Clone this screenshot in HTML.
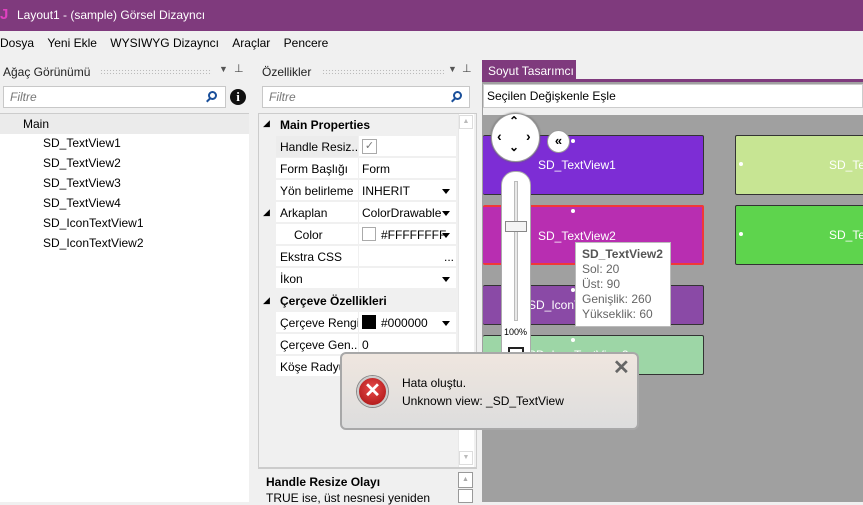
<!DOCTYPE html>
<html><head><meta charset="utf-8"><style>
*{box-sizing:border-box;margin:0;padding:0}
body{width:863px;height:502px;overflow:hidden;background:#f0f0f0;font-family:"Liberation Sans",sans-serif;font-size:12px;color:#000;position:relative}
.a{position:absolute}
.t{white-space:nowrap}
.hdr{color:#222;font-size:12px}
.dots{height:6px;background-image:radial-gradient(#bbb 0.6px,transparent 0.8px);background-size:3px 3px}
.filter{background:#fff;border:1px solid #c8c8c8;height:22px;font-style:italic;color:#777;padding:3px 6px}
.row{position:absolute;left:276px;width:180px;height:21px;border-bottom:1px solid #f0f0f0;background:#fff}
.row .n{position:absolute;left:4px;top:4px;width:78px;overflow:hidden;white-space:nowrap}
.row .v{position:absolute;left:86px;top:4px;white-space:nowrap}
.row .s{position:absolute;left:82px;top:0;width:1px;height:21px;background:#f0f0f0}
.dd{position:absolute;right:6px;top:9px;border-left:4px solid transparent;border-right:4px solid transparent;border-top:5px solid #000}
.box{position:absolute;border:1px solid #333;border-radius:2px;color:#fff;font-size:12px}
.dot{position:absolute;width:4px;height:4px;border-radius:2px;background:#fff}
</style></head><body>
<div class="a" style="left:0;top:0;width:863px;height:31px;background:#7f3a7d"></div>
<div class="a t" style="left:0;top:6px;color:#e040c0;font-weight:bold;font-size:15px">J</div>
<div class="a t" style="left:17px;top:8px;color:#fff;font-size:12px">Layout1 - (sample) Görsel Dizayncı</div>
<div class="a t" style="left:0;top:36px">Dosya&nbsp;&nbsp;&nbsp;&nbsp;Yeni Ekle&nbsp;&nbsp;&nbsp;&nbsp;WYSIWYG Dizayncı&nbsp;&nbsp;&nbsp;&nbsp;Araçlar&nbsp;&nbsp;&nbsp;&nbsp;Pencere</div>
<div class="a t hdr" style="left:3px;top:65px">Ağaç Görünümü</div>
<div class="a dots" style="left:100px;top:69px;width:112px"></div>
<div class="a t" style="left:219px;top:64px;font-size:9px;color:#555">▼</div>
<div class="a t" style="left:234px;top:62px;font-size:11px;color:#444">⊥</div>
<div class="a filter" style="left:3px;top:86px;width:223px">Filtre</div>
<div class="a" style="left:208px;top:91px;width:9px;height:9px;border:2px solid #1a4f9a;border-radius:50%"></div>
<div class="a" style="left:206px;top:99px;width:5px;height:2px;background:#1a4f9a;transform:rotate(-45deg)"></div>
<div class="a" style="left:230px;top:89px;width:16px;height:16px;border-radius:50%;background:#111;color:#fff;font-weight:bold;font-family:'Liberation Serif',serif;font-size:13px;text-align:center;line-height:16px">i</div>
<div class="a" style="left:0;top:113px;width:249px;height:389px;background:#fff;border-top:1px solid #ccc"></div>
<div class="a" style="left:0;top:114px;width:249px;height:20px;background:#ebebeb"></div>
<div class="a t" style="left:23px;top:117px">Main</div>
<div class="a t" style="left:43px;top:133px;line-height:20px">SD_TextView1<br>SD_TextView2<br>SD_TextView3<br>SD_TextView4<br>SD_IconTextView1<br>SD_IconTextView2</div>
<div class="a t hdr" style="left:262px;top:65px">Özellikler</div>
<div class="a dots" style="left:322px;top:69px;width:122px"></div>
<div class="a t" style="left:448px;top:64px;font-size:9px;color:#555">▼</div>
<div class="a t" style="left:462px;top:62px;font-size:11px;color:#444">⊥</div>
<div class="a filter" style="left:262px;top:86px;width:208px">Filtre</div>
<div class="a" style="left:453px;top:91px;width:9px;height:9px;border:2px solid #1a4f9a;border-radius:50%"></div>
<div class="a" style="left:451px;top:99px;width:5px;height:2px;background:#1a4f9a;transform:rotate(-45deg)"></div>
<div class="a" style="left:258px;top:113px;width:219px;height:355px;background:#f0f0f0;border:1px solid #ccc"></div>
<div class="a" style="left:458px;top:114px;width:16px;height:353px;background:#fff;border-left:1px solid #e8e8e8"></div>
<div class="a" style="left:459px;top:115px;width:14px;height:14px;border:1px solid #ddd;color:#bbb;font-size:7px;text-align:center;line-height:12px">▲</div>
<div class="a" style="left:459px;top:451px;width:14px;height:14px;border:1px solid #ddd;color:#bbb;font-size:7px;text-align:center;line-height:12px">▼</div>
<div class="a t" style="left:263px;top:118px;font-size:9px">◢</div>
<div class="a t" style="left:280px;top:118px;font-weight:bold">Main Properties</div>
<div class="row" style="top:136px"><div style="position:absolute;left:0;top:0;width:82px;height:21px;background:#ececec"></div><span class="n">Handle Resiz...</span><div class="s"></div><div style="position:absolute;left:86px;top:3px;width:15px;height:15px;border:1px solid #aaa;color:#777;font-size:11px;text-align:center;line-height:13px">✓</div></div>
<div class="row" style="top:158px"><span class="n">Form Başlığı</span><div class="s"></div><span class="v">Form</span></div>
<div class="row" style="top:180px"><span class="n">Yön belirleme</span><div class="s"></div><span class="v">INHERIT</span><div class="dd"></div></div>
<div class="a t" style="left:263px;top:207px;font-size:9px">◢</div>
<div class="row" style="top:202px"><span class="n">Arkaplan</span><div class="s"></div><span class="v" style="width:80px;overflow:hidden">ColorDrawable</span><div class="dd"></div></div>
<div class="row" style="top:224px"><span class="n" style="left:18px">Color</span><div class="s"></div><div style="position:absolute;left:86px;top:3px;width:14px;height:14px;border:1px solid #aaa;background:#fff"></div><span class="v" style="left:105px">#FFFFFFFF</span><div class="dd"></div></div>
<div class="row" style="top:246px"><span class="n">Ekstra CSS</span><div class="s"></div><span class="v" style="left:168px">...</span></div>
<div class="row" style="top:268px"><span class="n">İkon</span><div class="s"></div><div class="dd"></div></div>
<div class="a t" style="left:263px;top:295px;font-size:9px">◢</div>
<div class="a t" style="left:280px;top:294px;font-weight:bold">Çerçeve Özellikleri</div>
<div class="row" style="top:312px"><span class="n">Çerçeve Rengi</span><div class="s"></div><div style="position:absolute;left:86px;top:3px;width:14px;height:14px;background:#000"></div><span class="v" style="left:105px">#000000</span><div class="dd"></div></div>
<div class="row" style="top:334px"><span class="n">Çerçeve Gen...</span><div class="s"></div><span class="v">0</span></div>
<div class="row" style="top:356px"><span class="n">Köşe Radyus</span><div class="s"></div></div>
<div class="a" style="left:258px;top:468px;width:219px;height:34px;background:#f0f0f0;border-top:1px solid #ccc"></div>
<div class="a t" style="left:266px;top:475px;font-weight:bold">Handle Resize Olayı</div>
<div class="a t" style="left:266px;top:491px">TRUE ise, üst nesnesi yeniden</div>
<div class="a" style="left:458px;top:472px;width:15px;height:16px;background:#fff;border:1px solid #999;font-size:7px;color:#aaa;text-align:center;line-height:14px">▲</div>
<div class="a" style="left:458px;top:489px;width:15px;height:14px;background:#fff;border:1px solid #999"></div>
<div class="a" style="left:482px;top:60px;width:94px;height:20px;background:#7f3a7d"></div>
<div class="a t" style="left:488px;top:64px;color:#fff">Soyut Tasarımcı</div>
<div class="a" style="left:482px;top:79px;width:381px;height:3px;background:#7f3a7d"></div>
<div class="a" style="left:482px;top:82px;width:381px;height:420px;background:#a0a0a0"></div>
<div class="a" style="left:483px;top:84px;width:380px;height:24px;background:#fff;border:1px solid #ccc"></div>
<div class="a t" style="left:487px;top:89px">Seçilen Değişkenle Eşle</div>
<div class="a" style="left:483px;top:108px;width:380px;height:7px;background:#f0f0f0"></div>
<div class="box" style="left:483px;top:135px;width:221px;height:60px;background:#7d2dd5;border-left:none"><div class="dot" style="left:88px;top:3px"></div><span class="a t" style="left:55px;top:22px">SD_TextView1</span></div>
<div class="box" style="left:735px;top:135px;width:140px;height:60px;background:#c7e593"><div class="dot" style="left:3px;top:26px"></div><span class="a t" style="left:93px;top:22px">SD_TextView</span></div>
<div class="box" style="left:483px;top:205px;width:221px;height:60px;background:#b82eb1;border:2px solid #f03838;border-left:none"><div class="dot" style="left:88px;top:2px"></div><span class="a t" style="left:55px;top:22px">SD_TextView2</span></div>
<div class="box" style="left:735px;top:205px;width:140px;height:60px;background:#5ed44d"><div class="dot" style="left:3px;top:26px"></div><span class="a t" style="left:93px;top:22px">SD_TextView</span></div>
<div class="box" style="left:483px;top:285px;width:221px;height:40px;background:#8a4aa6;border-left:none"><div class="dot" style="left:88px;top:2px"></div><span class="a t" style="left:45px;top:12px">SD_IconTextView1</span></div>
<div class="box" style="left:483px;top:335px;width:221px;height:40px;background:#9dd6a6;border-left:none"><div class="dot" style="left:88px;top:2px"></div><span class="a t" style="left:45px;top:12px">SD_IconTextView2</span></div>
<div class="a" style="left:491px;top:113px;width:49px;height:49px;border-radius:50%;background:#fff;border:1px solid #999;box-shadow:0 0 2px #666"></div>
<div class="a t" style="left:509px;top:114px;font-size:12px;font-weight:bold">⌃</div>
<div class="a t" style="left:509px;top:140px;font-size:12px;font-weight:bold">⌄</div>
<div class="a t" style="left:497px;top:128px;font-size:14px;font-weight:bold">‹</div>
<div class="a t" style="left:526px;top:128px;font-size:14px;font-weight:bold">›</div>
<div class="a" style="left:547px;top:130px;width:23px;height:23px;border-radius:50%;background:#fff;border:1px solid #999;text-align:center;line-height:20px;font-weight:bold;font-size:13px">«</div>
<div class="a" style="left:501px;top:171px;width:30px;height:200px;border-radius:14px 14px 0 0;background:#fff;border:1px solid #aaa"></div>
<div class="a" style="left:514px;top:181px;width:4px;height:140px;background:#e8e8e8;border:1px solid #bbb"></div>
<div class="a" style="left:505px;top:221px;width:22px;height:11px;background:#f4f4f4;border:1px solid #888"></div>
<div class="a t" style="left:504px;top:327px;font-size:9px">100%</div>
<div class="a" style="left:508px;top:347px;width:16px;height:10px;border:2px solid #222"></div>
<div class="a" style="left:575px;top:242px;width:96px;height:85px;background:#fff;border:1px solid #bbb"></div>
<div class="a t" style="left:582px;top:247px;font-weight:bold;color:#555">SD_TextView2</div>
<div class="a t" style="left:582px;top:262px;color:#666;line-height:15px">Sol: 20<br>Üst: 90<br>Genişlik: 260<br>Yükseklik: 60</div>
<div class="a" style="left:340px;top:352px;width:299px;height:78px;border:2px solid #a8a8a8;border-radius:6px;background:linear-gradient(#efe6df,#dddddd)"></div>
<div class="a" style="left:357px;top:376px;width:31px;height:31px;border-radius:50%;background:radial-gradient(circle at 50% 40%,#e84a4a,#a51010);border:2px solid #ccc;box-shadow:0 0 0 1px #888;color:#fff;font-weight:bold;font-size:20px;text-align:center;line-height:26px">✕</div>
<div class="a t" style="left:402px;top:376px;font-size:12px">Hata oluştu.</div>
<div class="a t" style="left:402px;top:394px;font-size:12px">Unknown view: _SD_TextView</div>
<div class="a t" style="left:613px;top:355px;font-size:20px;font-weight:bold;color:#666">✕</div>
</body></html>
